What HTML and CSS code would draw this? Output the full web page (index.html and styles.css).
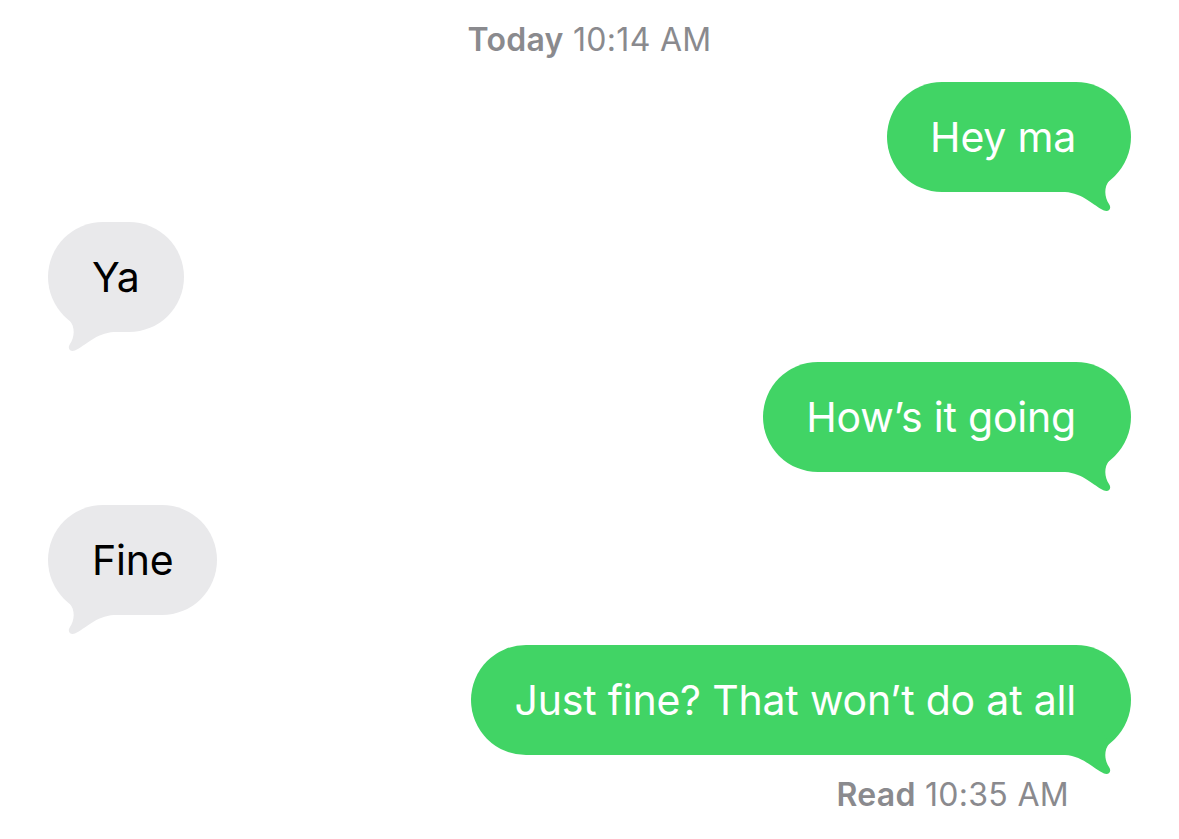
FILE: index.html
```html
<!DOCTYPE html>
<html>
<head>
<meta charset="utf-8">
<link rel="stylesheet" href="styles.css">
</head>
<body>
<div class="chat">
  <div class="stamp"><b>Today</b> 10:14 AM</div>

  <div class="row sent">
    <div class="bubble">Hey ma
      <svg class="tail" viewBox="-70 -30 70 50" width="70" height="50"><path d="M-66 -20 L-66 0 C-48 1 -37 14 -27 18.5 C-22 20.5 -19 16 -22 12 C-26 6 -28 -4 -21.4 -12 L-40 -40 Z"/></svg>
    </div>
  </div>

  <div class="row recv">
    <div class="bubble">Ya
      <svg class="tail" viewBox="-70 -30 70 50" width="70" height="50"><path d="M-66 -20 L-66 0 C-48 1 -37 14 -27 18.5 C-22 20.5 -19 16 -22 12 C-26 6 -28 -4 -21.4 -12 L-40 -40 Z"/></svg>
    </div>
  </div>

  <div class="row sent">
    <div class="bubble">How’s it going
      <svg class="tail" viewBox="-70 -30 70 50" width="70" height="50"><path d="M-66 -20 L-66 0 C-48 1 -37 14 -27 18.5 C-22 20.5 -19 16 -22 12 C-26 6 -28 -4 -21.4 -12 L-40 -40 Z"/></svg>
    </div>
  </div>

  <div class="row recv shift">
    <div class="bubble">Fine
      <svg class="tail" viewBox="-70 -30 70 50" width="70" height="50"><path d="M-66 -20 L-66 0 C-48 1 -37 14 -27 18.5 C-22 20.5 -19 16 -22 12 C-26 6 -28 -4 -21.4 -12 L-40 -40 Z"/></svg>
    </div>
  </div>

  <div class="row sent">
    <div class="bubble">Just fine? That won’t do at all
      <svg class="tail" viewBox="-70 -30 70 50" width="70" height="50"><path d="M-66 -20 L-66 0 C-48 1 -37 14 -27 18.5 C-22 20.5 -19 16 -22 12 C-26 6 -28 -4 -21.4 -12 L-40 -40 Z"/></svg>
    </div>
  </div>

  <div class="read"><b>Read</b> 10:35 AM</div>
</div>
</body>
</html>
```

FILE: styles.css
```css
html, body {
  margin: 0;
  padding: 0;
  background: #ffffff;
}

body {
  font-family: Inter, "Noto Sans", "Liberation Sans", sans-serif;
  width: 1179px;
  height: 839px;
  overflow: hidden;
}

.chat {
  display: flex;
  flex-direction: column;
  padding: 22px 48px 0 48px;
}

.stamp {
  text-align: center;
  color: #8a8a8e;
  font-size: 32px;
  line-height: 36px;
  letter-spacing: 0.3px;
  margin-bottom: 24px;
}

.stamp b,
.read b {
  font-weight: 600;
}

.row {
  display: flex;
  margin-bottom: 30px;
}

.row.shift {
  margin-top: 3px;
}

.row.sent {
  justify-content: flex-end;
}

.row.recv {
  justify-content: flex-start;
}

.bubble {
  position: relative;
  font-size: 41px;
  line-height: 48px;
  padding: 31px 44px 31px 44px;
  border-radius: 56px;
  letter-spacing: -0.2px;
  white-space: nowrap;
}

.sent .bubble {
  background: #41d465;
  color: #ffffff;
  padding-left: 43px;
  padding-right: 55px;
}

.recv .bubble {
  background: #e9e9eb;
  color: #000000;
}

.tail {
  position: absolute;
  bottom: -20px;
  right: 0;
}

.sent .tail {
  fill: #41d465;
}

.recv .tail {
  fill: #e9e9eb;
  right: auto;
  left: 0;
  transform: scaleX(-1);
}

.row:last-of-type {
  margin-bottom: 0;
}

.read {
  align-self: flex-end;
  margin-top: -8px;
  margin-right: 62px;
  color: #8a8a8e;
  font-size: 32px;
  line-height: 36px;
  letter-spacing: 0.3px;
}
```
